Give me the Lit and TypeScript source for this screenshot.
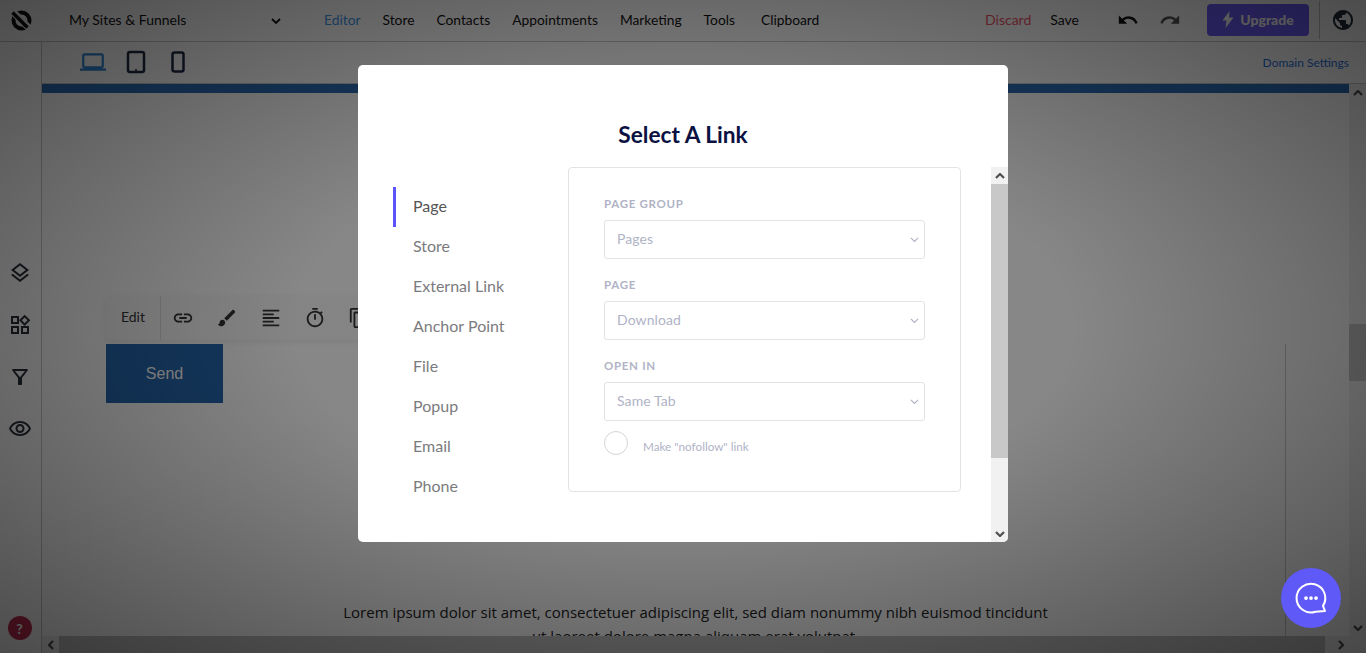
import { LitElement, html, css, svg } from "lit";
import { customElement } from "lit/decorators.js";

const icon = (d: string, size = 24) => html`<svg width=${size} height=${size} viewBox="0 0 24 24" fill="currentColor">${svg`<path d=${d}></path>`}</svg>`;

const P = {
  link: "M3.9 12c0-1.71 1.39-3.1 3.1-3.1h4V7H7c-2.76 0-5 2.24-5 5s2.24 5 5 5h4v-1.9H7c-1.71 0-3.1-1.39-3.1-3.1zM8 13h8v-2H8v2zm9-6h-4v1.9h4c1.71 0 3.1 1.39 3.1 3.1s-1.39 3.1-3.1 3.1h-4V17h4c2.76 0 5-2.24 5-5s-2.24-5-5-5z",
  brush: "M7 14c-1.66 0-3 1.34-3 3 0 1.31-1.16 2-2 2 .92 1.22 2.49 2 4 2 2.21 0 4-1.79 4-4 0-1.66-1.34-3-3-3zm13.71-9.37l-1.34-1.34c-.39-.39-1.02-.39-1.41 0L9 12.25 11.75 15l8.96-8.96c.39-.39.39-1.02 0-1.41z",
  align: "M15 15H3v2h12v-2zm0-8H3v2h12V7zM3 13h18v-2H3v2zm0 8h18v-2H3v2zM3 3v2h18V3H3z",
  timer: "M15 1H9v2h6V1zm-4 13h2V8h-2v6zm8.03-6.61l1.42-1.42c-.43-.51-.9-.99-1.41-1.41l-1.42 1.42C16.07 4.74 14.12 4 12 4c-4.97 0-9 4.03-9 9s4.02 9 9 9 9-4.03 9-9c0-2.12-.74-4.07-1.97-5.61zM12 20c-3.87 0-7-3.13-7-7s3.13-7 7-7 7 3.13 7 7-3.13 7-7 7z",
  copy: "M16 1H4c-1.1 0-2 .9-2 2v14h2V3h12V1zm3 4H8c-1.1 0-2 .9-2 2v14c0 1.1.9 2 2 2h11c1.1 0 2-.9 2-2V7c0-1.1-.9-2-2-2zm0 16H8V7h11v14z",
  undo: "M12.5 8c-2.65 0-5.05.99-6.9 2.6L2 7v9h9l-3.62-3.62c1.39-1.16 3.16-1.88 5.12-1.88 3.54 0 6.55 2.31 7.6 5.5l2.37-.78C21.08 11.03 17.15 8 12.5 8z",
  redo: "M18.4 10.6C16.55 8.99 14.15 8 11.5 8c-4.65 0-8.58 3.03-9.96 7.22L3.9 16c1.05-3.19 4.05-5.5 7.6-5.5 1.95 0 3.73.72 5.12 1.88L13 16h9V7l-3.6 3.6z",
  globe: "M12 2C6.48 2 2 6.48 2 12s4.48 10 10 10 10-4.48 10-10S17.52 2 12 2zm-1 17.93c-3.95-.49-7-3.85-7-7.93 0-.62.08-1.21.21-1.79L9 15v1c0 1.1.9 2 2 2v1.93zm6.9-2.54c-.26-.81-1-1.39-1.9-1.39h-1v-3c0-.55-.45-1-1-1H8v-2h2c.55 0 1-.45 1-1V7h2c1.1 0 2-.9 2-2v-.41c2.93 1.19 5 4.06 5 7.41 0 2.08-.8 3.97-2.1 5.39z",
  eye: "M12 6c3.79 0 7.17 2.13 8.82 5.5C19.17 14.87 15.79 17 12 17s-7.17-2.13-8.82-5.5C4.83 8.13 8.21 6 12 6m0-2C7 4 2.73 7.11 1 11.5 2.73 15.89 7 19 12 19s9.27-3.11 11-7.5C21.27 7.11 17 4 12 4zm0 5c1.38 0 2.5 1.12 2.5 2.5S13.38 14 12 14s-2.5-1.12-2.5-2.5S10.62 9 12 9m0-2c-2.48 0-4.5 2.02-4.5 4.5S9.52 16 12 16s4.5-2.02 4.5-4.5S14.48 7 12 7z",
  layers: "M11.99 18.54l-7.37-5.73L3 14.07l9 7 9-7-1.63-1.27zM12 16l7.36-5.73L21 9l-9-7-9 7 1.63 1.27L12 16zm0-11.47L17.74 9 12 13.47 6.26 9 12 4.53z",
  widgets: "M16.66 4.52l2.83 2.83-2.83 2.83-2.83-2.83 2.83-2.83M9 5v4H5V5h4m10 10v4h-4v-4h4M9 15v4H5v-4h4m7.66-13.31L11 7.34 16.66 13l5.66-5.66-5.66-5.65zM11 3H3v8h8V3zm10 10h-8v8h8v-8zm-10 0H3v8h8v-8z",
  filter: "M7 6h10l-5.01 6.3L7 6zm-2.75-.39C6.27 8.2 10 13 10 13v6c0 .55.45 1 1 1h2c.55 0 1-.45 1-1v-6s3.72-4.8 5.74-7.39c.51-.66.04-1.61-.79-1.61H5.04c-.83 0-1.3.95-.79 1.61z",
  laptop: "M20 18c1.1 0 2-.9 2-2V6c0-1.1-.9-2-2-2H4c-1.1 0-2 .9-2 2v10c0 1.1.9 2 2 2H0v2h24v-2h-4zM4 6h16v10H4V6z",
};

const chevron = (w: number, h: number, sw: number, up = false) => html`<svg width=${w} height=${h} viewBox="0 0 10 6" fill="none" stroke="currentColor" stroke-width=${sw}>${svg`<path d=${up ? "M1 5l4-4 4 4" : "M1 1l4 4 4-4"}></path>`}</svg>`;

const navItems = ["Editor", "Store", "Contacts", "Appointments", "Marketing", "Tools", "Clipboard"];
const linkTypes = ["Page", "Store", "External Link", "Anchor Point", "File", "Popup", "Email", "Phone"];
const fields = [
  { label: "PAGE GROUP", value: "Pages" },
  { label: "PAGE", value: "Download" },
  { label: "OPEN IN", value: "Same Tab" },
];

@customElement("app-root")
export class AppRoot extends LitElement {
  static styles = css`
    :host {
      display: block;
      position: relative;
      width: 1366px;
      height: 653px;
      overflow: hidden;
      background: #fff;
      font-family: Lato, "Liberation Sans", sans-serif;
      color: #111;
    }
    * { box-sizing: border-box; }
    svg { display: block; flex: none; }

    .page { display: flex; flex-direction: column; height: 100%; }

    .topbar {
      flex: none;
      height: 42px;
      display: flex;
      align-items: center;
      padding-bottom: 2px;
      font-size: 14px;
      border-bottom: 1px solid #c8c8c8;
    }
    .logo { width: 42px; display: flex; justify-content: center; }
    .sites { margin-left: 27px; width: 199px; }
    .caret { width: 15px; color: #111; margin-right: 41px; display: flex; justify-content: center; padding-top: 3px; }
    .nav { display: flex; gap: 22px; font-size: 13.8px; }
    .nav .active { color: #3d96ea; }
    .nav span:last-child { margin-left: 4px; }
    .actions { margin-left: auto; display: flex; align-items: center; }
    .discard { color: #f0546a; margin-right: 19px; }
    .save { margin-right: 38px; }
    .undo { color: #111; margin-right: 20px; }
    .redo { color: #555; margin-right: 26px; }
    .upgrade {
      width: 102px;
      height: 32px;
      background: #6d5dfc;
      border-radius: 4px;
      display: flex;
      align-items: center;
      justify-content: center;
      gap: 6px;
      font-weight: 900;
      color: #fff;
      margin-right: 10px;
    }
    .globe {
      width: 47px;
      height: 38px;
      border-left: 1px solid #c4c4c4;
      display: flex;
      align-items: center;
      justify-content: center;
      color: #222e3a;
    }

    .below { flex: 1; min-height: 0; display: flex; }
    .rail {
      flex: none;
      width: 42px;
      border-right: 1px solid #c8c8c8;
      display: flex;
      flex-direction: column;
      align-items: center;
      color: #2a3038;
      padding: 219px 2px 0 0;
    }
    .rail .gap { height: 28px; }
    .rail .tool { height: 24px; }
    .help {
      margin-top: auto;
      margin-bottom: 13px;
      width: 24px;
      height: 24px;
      border-radius: 50%;
      background: #c42b55;
      color: #fff;
      font-size: 14px;
      font-weight: 900;
      display: flex;
      align-items: center;
      justify-content: center;
    }

    .main { flex: 1; min-width: 0; display: flex; flex-direction: column; }
    .subbar {
      flex: none;
      height: 42px;
      display: flex;
      align-items: center;
      padding: 0 0 2px 38px;
      color: #1e2a44;
      border-bottom: 1px solid #c8c8c8;
    }
    .subbar .devices { display: flex; align-items: center; }
    .subbar .laptop { color: #2f86d8; margin-right: 20px; }
    .subbar .tablet { margin-right: 25px; }
    .domain { margin: 2px 17px 0 auto; font-size: 12px; color: #2a6fe0; }

    .workarea { flex: 1; min-height: 0; display: flex; }
    .canvas { flex: 1; min-width: 0; position: relative; overflow: hidden; display: flex; flex-direction: column; }
    .strip { flex: none; height: 9px; background: #2a6cb5; }
    .guide { position: absolute; left: 1243px; top: 260px; bottom: 0; width: 1px; background: #c2ccd4; }
    .block { margin: 203px 0 0 64px; }
    .toolbar {
      width: 300px;
      height: 44px;
      background: #fafafa;
      border-radius: 4px;
      box-shadow: 0 2px 6px rgba(0, 0, 0, 0.08);
      display: flex;
      align-items: center;
      color: #333;
    }
    .toolbar .edit { width: 55px; height: 100%; padding-bottom: 3px; display: flex; align-items: center; justify-content: center; font-size: 14px; border-right: 1px solid #ddd; }
    .toolbar .tools { display: flex; gap: 22px; padding-left: 11px; }
    .send {
      width: 117px;
      height: 59px;
      margin-top: 4px;
      background: #2567ae;
      color: #fff;
      font: 16px "Liberation Sans", Arial, sans-serif;
      display: flex;
      align-items: center;
      justify-content: center;
    }
    .lorem {
      width: 720px;
      margin: 197px auto 0;
      font: 15px/24px "Open Sans", sans-serif;
      text-align: center;
      color: #222;
    }

    .vscroll { flex: none; width: 17px; background: #f1f1f1; display: flex; flex-direction: column; align-items: center; color: #505050; }
    .vscroll .btn { flex: none; height: 17px; display: flex; align-items: center; justify-content: center; }
    .vscroll .thumb { flex: none; width: 100%; height: 57px; margin-top: 223px; background: #c8c8c8; }
    .vscroll .btn:last-child { margin-top: auto; }
    .hscroll { flex: none; height: 17px; display: flex; background: #f1f1f1; color: #505050; }
    .hscroll .btn { flex: none; width: 17px; display: flex; align-items: center; justify-content: center; }
    .hscroll .thumb { width: 1266px; background: #c1c1c1; }
    .hscroll .right { margin-left: auto; }

    .overlay {
      position: absolute;
      inset: 0;
      display: flex;
      justify-content: center;
      align-items: flex-start;
      padding-top: 65px;
      background: radial-gradient(ellipse at center, rgba(0, 0, 0, 0.47) 0%, rgba(0, 0, 0, 0.47) 40%, rgba(0, 0, 0, 0.7) 100%);
    }
    .modal {
      width: 650px;
      height: 477px;
      background: #fff;
      border-radius: 5px;
      overflow: hidden;
      display: flex;
      flex-direction: column;
    }
    h2 {
      margin: 0;
      flex: none;
      height: 102px;
      padding-top: 56px;
      text-align: center;
      font-size: 22.7px;
      line-height: 28px;
      font-weight: 700;
      color: #0b1142;
    }
    .modal-body { flex: 1; min-height: 0; display: flex; padding-left: 35px; }
    .types { flex: none; width: 175px; padding: 20px 0 0; list-style: none; margin: 0; }
    .types li {
      height: 40px;
      padding: 0 0 3px 20px;
      display: flex;
      align-items: center;
      font-size: 16px;
      color: #7b7b7e;
    }
    .types li.on { color: #555; box-shadow: inset 3px 0 0 #5b54f8; }
    .panel {
      flex: none;
      width: 393px;
      height: 325px;
      border: 1px solid #e3e3e6;
      border-radius: 4px;
      padding: 29px 35px 0;
    }
    .panel label {
      display: block;
      height: 14px;
      line-height: 14px;
      font-size: 11.5px;
      font-weight: 700;
      letter-spacing: 0.7px;
      color: #b0b3c6;
    }
    .select {
      height: 39px;
      margin: 9px 0 19px;
      border: 1px solid #e3e3e6;
      border-radius: 3px;
      padding: 0 5px 2px 12px;
      display: flex;
      align-items: center;
      justify-content: space-between;
      font-size: 14px;
      letter-spacing: 0.1px;
      color: #b0b3c6;
    }
    .select svg { margin-top: 2px; }
    .field:nth-child(3) .select { margin-bottom: 10px; }
    .nofollow { display: flex; align-items: center; gap: 15px; font-size: 11.7px; color: #b0b3c6; }
    .nofollow span:last-child { padding-top: 5px; }
    .radio { width: 24px; height: 24px; border: 1px solid #d4d4d8; border-radius: 50%; }
    .mscroll {
      flex: none;
      width: 17px;
      margin-left: 30px;
      background: #f1f1f1;
      display: flex;
      flex-direction: column;
      align-items: center;
      color: #505050;
    }
    .mscroll .btn { flex: none; height: 17px; display: flex; align-items: center; justify-content: center; }
    .mscroll .thumb { flex: none; width: 100%; height: 274px; background: #c8c8c8; }
    .mscroll .btn:last-child { margin-top: auto; }

    .chat {
      position: absolute;
      right: 25px;
      bottom: 25px;
      width: 60px;
      height: 60px;
      border-radius: 50%;
      background: #5f59f7;
      display: flex;
      align-items: center;
      justify-content: center;
    }
  `;

  private _logo() {
    return html`<svg width="24" height="24" viewBox="0 0 24 24">
      ${svg`<circle cx="12.500" cy="12.500" r="8" fill="none" stroke="#111" stroke-width="4"></circle>
      <path d="M3 3L21 21" stroke="#fff" stroke-width="7"></path>
      <path d="M3.500 4.500L18.500 19.500" stroke="#111" stroke-width="3.500"></path>`}
    </svg>`;
  }

  render() {
    return html`
      <div class="page">
        <header class="topbar">
          <div class="logo">${this._logo()}</div>
          <div class="sites">My Sites &amp; Funnels</div>
          <div class="caret">${chevron(10, 6, 1.8)}</div>
          <nav class="nav">
            ${navItems.map((n, i) => html`<span class=${i === 0 ? "active" : ""}>${n}</span>`)}
          </nav>
          <div class="actions">
            <span class="discard">Discard</span>
            <span class="save">Save</span>
            <span class="undo">${icon(P.undo, 22)}</span>
            <span class="redo">${icon(P.redo, 22)}</span>
            <div class="upgrade">
              <svg width="12" height="17" viewBox="0 0 12 17" fill="currentColor">${svg`<path d="M7.500 0L0.500 9.500h4L3.500 17l8-10.500h-4.500z"></path>`}</svg>
              Upgrade
            </div>
            <div class="globe">${icon(P.globe)}</div>
          </div>
        </header>
        <div class="below">
          <aside class="rail">
            <span class="tool">${icon(P.layers)}</span>
            <span class="gap"></span>
            <span class="tool">${icon(P.widgets)}</span>
            <span class="gap"></span>
            <span class="tool">${icon(P.filter)}</span>
            <span class="gap"></span>
            <span class="tool">${icon(P.eye)}</span>
            <div class="help">?</div>
          </aside>
          <div class="main">
            <div class="subbar">
              <div class="devices">
                <span class="laptop">${icon(P.laptop, 26)}</span>
                <svg class="tablet" width="20" height="24" viewBox="0 0 20 24">
                  ${svg`<rect x="2" y="2" width="16" height="20" rx="2" fill="none" stroke="currentColor" stroke-width="2.500"></rect><circle cx="10" cy="20" r="1" fill="currentColor"></circle>`}
                </svg>
                <svg width="14" height="22" viewBox="0 0 14 22">
                  ${svg`<rect x="1.500" y="1.500" width="11" height="19" rx="2" fill="none" stroke="currentColor" stroke-width="2.500"></rect>`}
                </svg>
              </div>
              <span class="domain">Domain Settings</span>
            </div>
            <div class="workarea">
              <div class="canvas">
                <div class="strip"></div>
                <div class="guide"></div>
                <div class="block">
                  <div class="toolbar">
                    <div class="edit">Edit</div>
                    <div class="tools">
                      ${icon(P.link, 22)}${icon(P.brush, 22)}${icon(P.align, 22)}${icon(P.timer, 22)}${icon(P.copy, 22)}
                    </div>
                  </div>
                  <div class="send">Send</div>
                </div>
                <p class="lorem">Lorem ipsum dolor sit amet, consectetuer adipiscing elit, sed diam nonummy nibh euismod tincidunt ut laoreet dolore magna aliquam erat volutpat.</p>
              </div>
              <div class="vscroll">
                <div class="btn">${chevron(10, 6, 2.2, true)}</div>
                <div class="thumb"></div>
                <div class="btn">${chevron(10, 6, 2.2)}</div>
              </div>
            </div>
            <div class="hscroll">
              <div class="btn"><svg width="6" height="10" viewBox="0 0 6 10" fill="none" stroke="currentColor" stroke-width="2.200">${svg`<path d="M5 1L1 5l4 4"></path>`}</svg></div>
              <div class="thumb"></div>
              <div class="btn right"><svg width="6" height="10" viewBox="0 0 6 10" fill="none" stroke="currentColor" stroke-width="2.200">${svg`<path d="M1 1l4 4-4 4"></path>`}</svg></div>
              <div class="btn"></div>
            </div>
          </div>
        </div>
      </div>

      <div class="overlay">
        <section class="modal">
          <h2>Select A Link</h2>
          <div class="modal-body">
            <ul class="types">
              ${linkTypes.map((t, i) => html`<li class=${i === 0 ? "on" : ""}>${t}</li>`)}
            </ul>
            <div class="panel">
              ${fields.map((f) => html`
                <div class="field">
                  <label>${f.label}</label>
                  <div class="select">${f.value}${chevron(9, 5.4, 1.3)}</div>
                </div>
              `)}
              <div class="nofollow"><span class="radio"></span><span>Make "nofollow" link</span></div>
            </div>
            <div class="mscroll">
              <div class="btn">${chevron(10, 6, 2.2, true)}</div>
              <div class="thumb"></div>
              <div class="btn">${chevron(10, 6, 2.2)}</div>
            </div>
          </div>
        </section>
      </div>

      <div class="chat">
        <svg width="40" height="40" viewBox="0 0 32 32" fill="none" stroke="#fff" stroke-width="1.600">
          ${svg`<path d="M25.600 22.300A11.500 11.500 0 1 0 19.500 27L27.200 26.400z" stroke-linejoin="round"></path>
          <circle cx="12" cy="16" r="1.500" fill="#fff" stroke="none"></circle>
          <circle cx="16" cy="16" r="1.500" fill="#fff" stroke="none"></circle>
          <circle cx="20" cy="16" r="1.500" fill="#fff" stroke="none"></circle>`}
        </svg>
      </div>
    `;
  }
}
